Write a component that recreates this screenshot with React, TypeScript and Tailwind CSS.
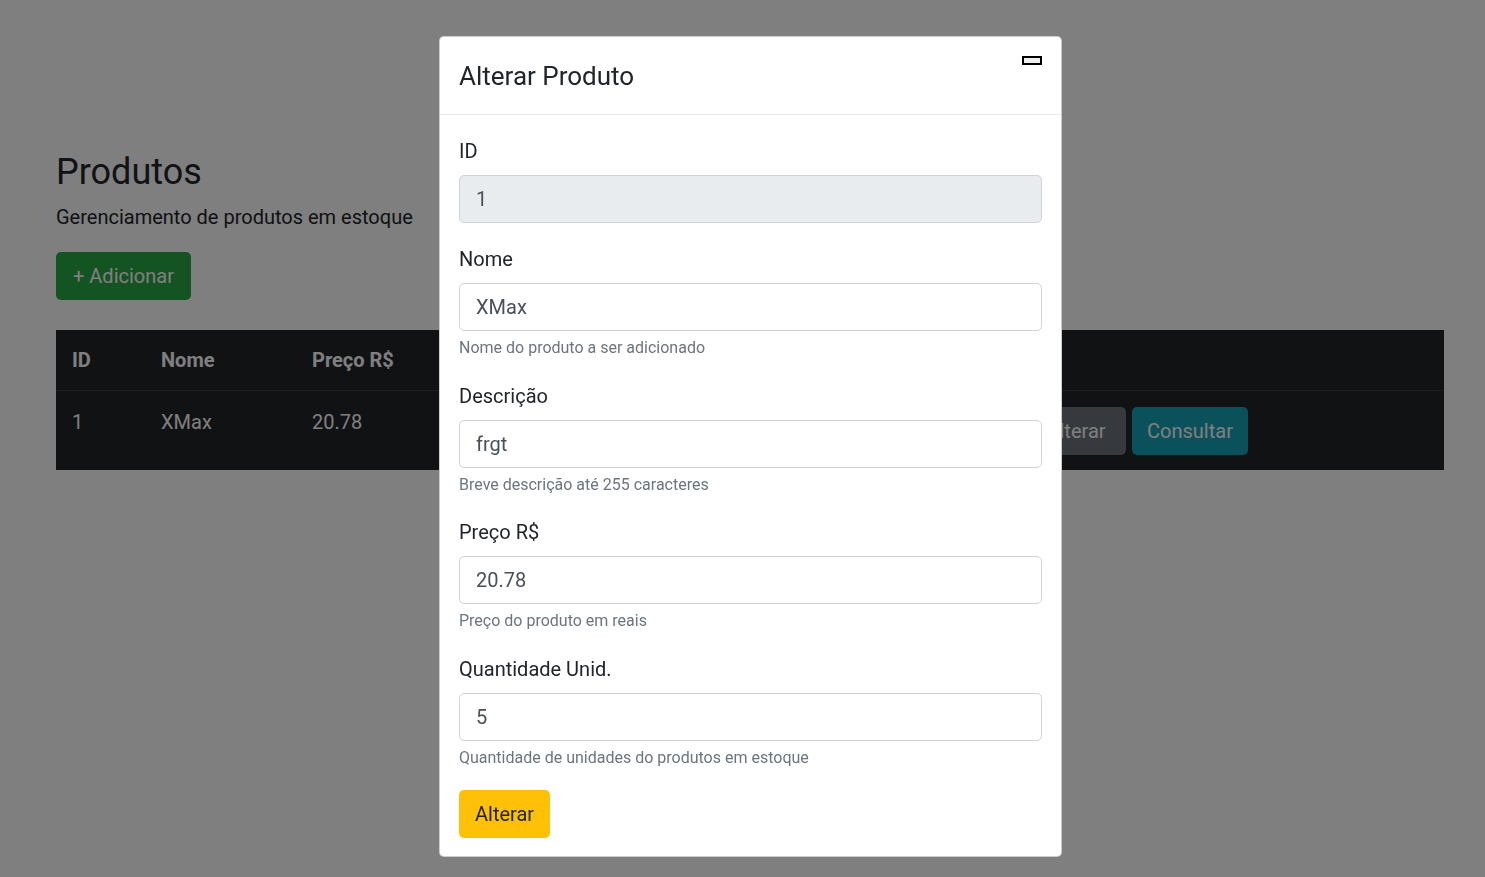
import React from "react";

type Field = {
  label: string;
  value: string;
  help?: string;
  disabled?: boolean;
};

const fields: Field[] = [
  { label: "ID", value: "1", disabled: true },
  { label: "Nome", value: "XMax", help: "Nome do produto a ser adicionado" },
  { label: "Descrição", value: "frgt", help: "Breve descrição até 255 caracteres" },
  { label: "Preço R$", value: "20.78", help: "Preço do produto em reais" },
  { label: "Quantidade Unid.", value: "5", help: "Quantidade de unidades do produtos em estoque" },
];

function ProductsPage() {
  return (
    <div className="pt-[151px] pl-[56px] pr-[41px] text-[#212529]">
      <h1 className="text-[36px] leading-[1.2] font-normal mb-2">Produtos</h1>
      <p className="text-[20px] leading-[30px] mb-5">Gerenciamento de produtos em estoque</p>
      <button className="h-[48px] px-[17px] rounded-[5px] bg-[#28a745] text-white text-[20px] mb-[30px]">
        + Adicionar
      </button>

      <table className="w-full table-fixed border-collapse bg-[#212529] text-white text-[20px] leading-[30px]">
        <colgroup>
          <col className="w-[89px]" />
          <col className="w-[151px]" />
          <col className="w-[200px]" />
          <col className="w-[250px]" />
          <col className="w-[162px]" />
          <col />
        </colgroup>
        <thead>
          <tr className="border-b border-[#373b3e] text-left">
            <th className="px-4 pt-[15px] pb-[15px] font-bold">ID</th>
            <th className="px-4 pt-[15px] pb-[15px] font-bold">Nome</th>
            <th className="px-4 pt-[15px] pb-[15px] font-bold">Preço R$</th>
            <th className="px-4 pt-[15px] pb-[15px] font-bold">Descrição</th>
            <th className="px-4 pt-[15px] pb-[15px] font-bold">Qtd.</th>
            <th className="px-4 pt-[15px] pb-[15px] font-bold">Ações</th>
          </tr>
        </thead>
        <tbody>
          <tr className="align-top">
            <td className="px-4 pt-4 pb-[15px]">1</td>
            <td className="px-4 pt-4 pb-[15px]">XMax</td>
            <td className="px-4 pt-4 pb-[15px]">20.78</td>
            <td className="px-4 pt-4 pb-[15px]">frgt</td>
            <td className="px-4 pt-4 pb-[15px]">5</td>
            <td className="px-4 pt-4 pb-[15px]">
              <div className="flex gap-[6px]">
                <button className="h-[48px] w-[96px] rounded-[5px] bg-[#dc3545] text-white">Excluir</button>
                <button className="h-[48px] w-[100px] rounded-[5px] bg-[#6c757d] text-white">Alterar</button>
                <button className="h-[48px] w-[116px] rounded-[5px] bg-[#17a2b8] text-white">Consultar</button>
              </div>
            </td>
          </tr>
        </tbody>
      </table>
    </div>
  );
}

function EditModal() {
  return (
    <div className="fixed inset-0 bg-black/50 overflow-hidden">
      <div className="ml-[439px] mt-[36px] w-[623px] bg-white border border-black/20 rounded-[5px] text-[#212529]">
        <div className="flex justify-between items-start px-[19px] pt-[21px] pb-5 border-b border-[#e9ecef]">
          <h5 className="text-[26px] leading-[36px] font-normal">Alterar Produto</h5>
          <button className="mt-[-2px] w-[20px] h-[9px] border-2 border-black bg-[#efefef]" aria-label="Fechar" />
        </div>
        <div className="px-[19px] pt-[21px] pb-[18px]">
          {fields.map((f, i) => (
            <div
              key={f.label}
              className={!f.help ? "mb-[21px]" : i === fields.length - 1 ? "mb-[20px]" : "mb-[20.5px]"}
            >
              <label className="block text-[20px] leading-[30px] mb-[9px]">{f.label}</label>
              <input
                readOnly
                disabled={f.disabled}
                value={f.value}
                className={
                  f.disabled
                    ? "block w-full h-[48px] px-4 text-[20px] text-[#495057] bg-[#e9ecef] border border-[#ced4da] rounded-[5px]"
                    : "block w-full h-[48px] px-4 text-[20px] text-[#495057] bg-white border border-[#ced4da] rounded-[5px]"
                }
              />
              {f.help && (
                <p className="mt-[5px] text-[16px] leading-[24px] text-[#6c757d]">{f.help}</p>
              )}
            </div>
          ))}
          <button className="h-[48px] px-4 rounded-[5px] bg-[#ffc107] text-[#212529] text-[20px]">Alterar</button>
        </div>
      </div>
    </div>
  );
}

export default function App() {
  return (
    <div className="relative min-h-screen bg-white font-[Roboto,sans-serif]">
      <ProductsPage />
      <EditModal />
    </div>
  );
}
